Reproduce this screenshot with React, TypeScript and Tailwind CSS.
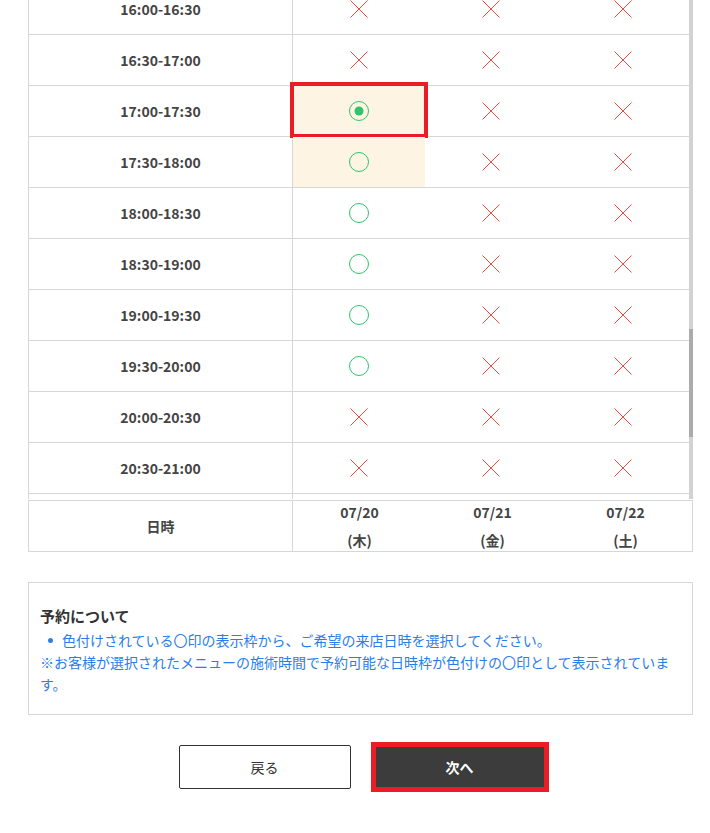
import { useLayoutEffect, useRef } from "react";

type Mark = "x" | "o" | "selected";

const font = "font-['Noto_Sans_CJK_JP','Noto_Sans',sans-serif]";

const times: string[] = [];
for (let i = 0; i < 48; i++) {
  const pad = (n: number) => String(n).padStart(2, "0");
  const fmt = (m: number) => `${pad(Math.floor(m / 60))}:${pad(m % 60)}`;
  times.push(`${fmt(i * 30)}-${fmt(i * 30 + 30)}`);
}

// 07/20 is open from 17:00 to 20:00, everything else is full
function markFor(slot: number, day: number): Mark {
  if (day === 0 && slot >= 34 && slot < 40) {
    return slot === 34 ? "selected" : "o";
  }
  return "x";
}

const days = [
  { date: "07/20", dow: "(木)" },
  { date: "07/21", dow: "(金)" },
  { date: "07/22", dow: "(土)" },
];

function Cross() {
  return (
    <svg width="18" height="18" viewBox="0 0 18 18" className="block">
      <path d="M0.5 0.5 L17.5 17.5 M17.5 0.5 L0.5 17.5" stroke="#f0493e" strokeWidth="1" fill="none" />
    </svg>
  );
}

function Circle({ selected }: { selected?: boolean }) {
  return (
    <svg width="20" height="20" viewBox="0 0 20 20" className="block">
      <circle cx="10" cy="10" r="9.5" stroke="#2fc46b" strokeWidth="1" fill="none" />
      {selected && <circle cx="10" cy="10" r="4.5" fill="#2fc46b" />}
    </svg>
  );
}

function SlotCell({ mark, cream }: { mark: Mark; cream: boolean }) {
  return (
    <div className={`relative flex flex-1 items-center justify-center ${cream ? "bg-[#fdf4e4]" : ""}`}>
      {mark === "x" ? <Cross /> : <Circle selected={mark === "selected"} />}
      {mark === "selected" && (
        <div className="absolute -left-[3px] -top-[4px] h-[56px] w-[138px] border-4 border-[#ec1c24]" />
      )}
    </div>
  );
}

export default function App() {
  const scrollRef = useRef<HTMLDivElement>(null);

  useLayoutEffect(() => {
    if (scrollRef.current) scrollRef.current.scrollTop = 1648;
  }, []);

  return (
    <div className={`${font} bg-white pl-[28px] pr-[17px] text-[#333]`}>
      <div className="relative">
        <div
          ref={scrollRef}
          className="h-[499px] overflow-y-scroll border-l border-[#d6d6d6] pr-[4px] [scrollbar-width:none]"
        >
          {times.map((t, i) => (
            <div key={t} className="flex h-[51px] border-b border-[#d6d6d6]">
              <div className="flex w-[264px] shrink-0 items-center justify-center border-r border-[#d6d6d6] text-[14px] font-bold text-[#444]">
                {t}
              </div>
              {days.map((d, j) => (
                <SlotCell key={d.date} mark={markFor(i, j)} cream={j === 0 && i >= 34 && i < 36} />
              ))}
            </div>
          ))}
        </div>
        {/* scrollbar */}
        <div className="absolute bottom-0 right-0 top-0 w-[4px] bg-[#d2d2d2]">
          <div className="mt-[329px] h-[108px] w-full bg-[#ababab]" />
        </div>
      </div>

      <div className="mt-[1px] flex h-[52px] border border-[#d6d6d6] text-[14px] font-bold text-[#444]">
        <div className="flex w-[264px] shrink-0 items-center justify-center border-r border-[#d6d6d6]">
          日時
        </div>
        {days.map((d) => (
          <div key={d.date} className="flex flex-1 flex-col items-center justify-center leading-[28px]">
            <span>{d.date}</span>
            <span>{d.dow}</span>
          </div>
        ))}
      </div>

      <div className="mt-[30px] border border-[#d6d6d6] px-[11px] pb-[19px] pt-[20px]">
        <h2 className="text-[15px] font-bold leading-[26px] text-[#333]">予約について</h2>
        <div className="text-[14px] leading-[22px] text-[#2b7de9]">
          <div className="flex items-center pl-[8px]">
            <span className="mr-[9px] inline-block h-[5px] w-[5px] rounded-full bg-[#2b7de9]" />
            <span>色付けされている〇印の表示枠から、ご希望の来店日時を選択してください。</span>
          </div>
          <p>※お客様が選択されたメニューの施術時間で予約可能な日時枠が色付けの〇印として表示されています。</p>
        </div>
      </div>

      <div className="flex justify-center gap-[23px] pb-[40px] pl-[3px] pt-[30px]">
        <button className="h-[44px] w-[172px] rounded-[2px] border border-[#333] bg-white text-[14px] text-[#333]">
          戻る
        </button>
        <button className="h-[44px] w-[172px] bg-[#3c3c3c] text-[14px] font-bold text-white outline-[5px] outline-offset-[-2px] outline-[#ec1c24] outline-solid">
          次へ
        </button>
      </div>
    </div>
  );
}
